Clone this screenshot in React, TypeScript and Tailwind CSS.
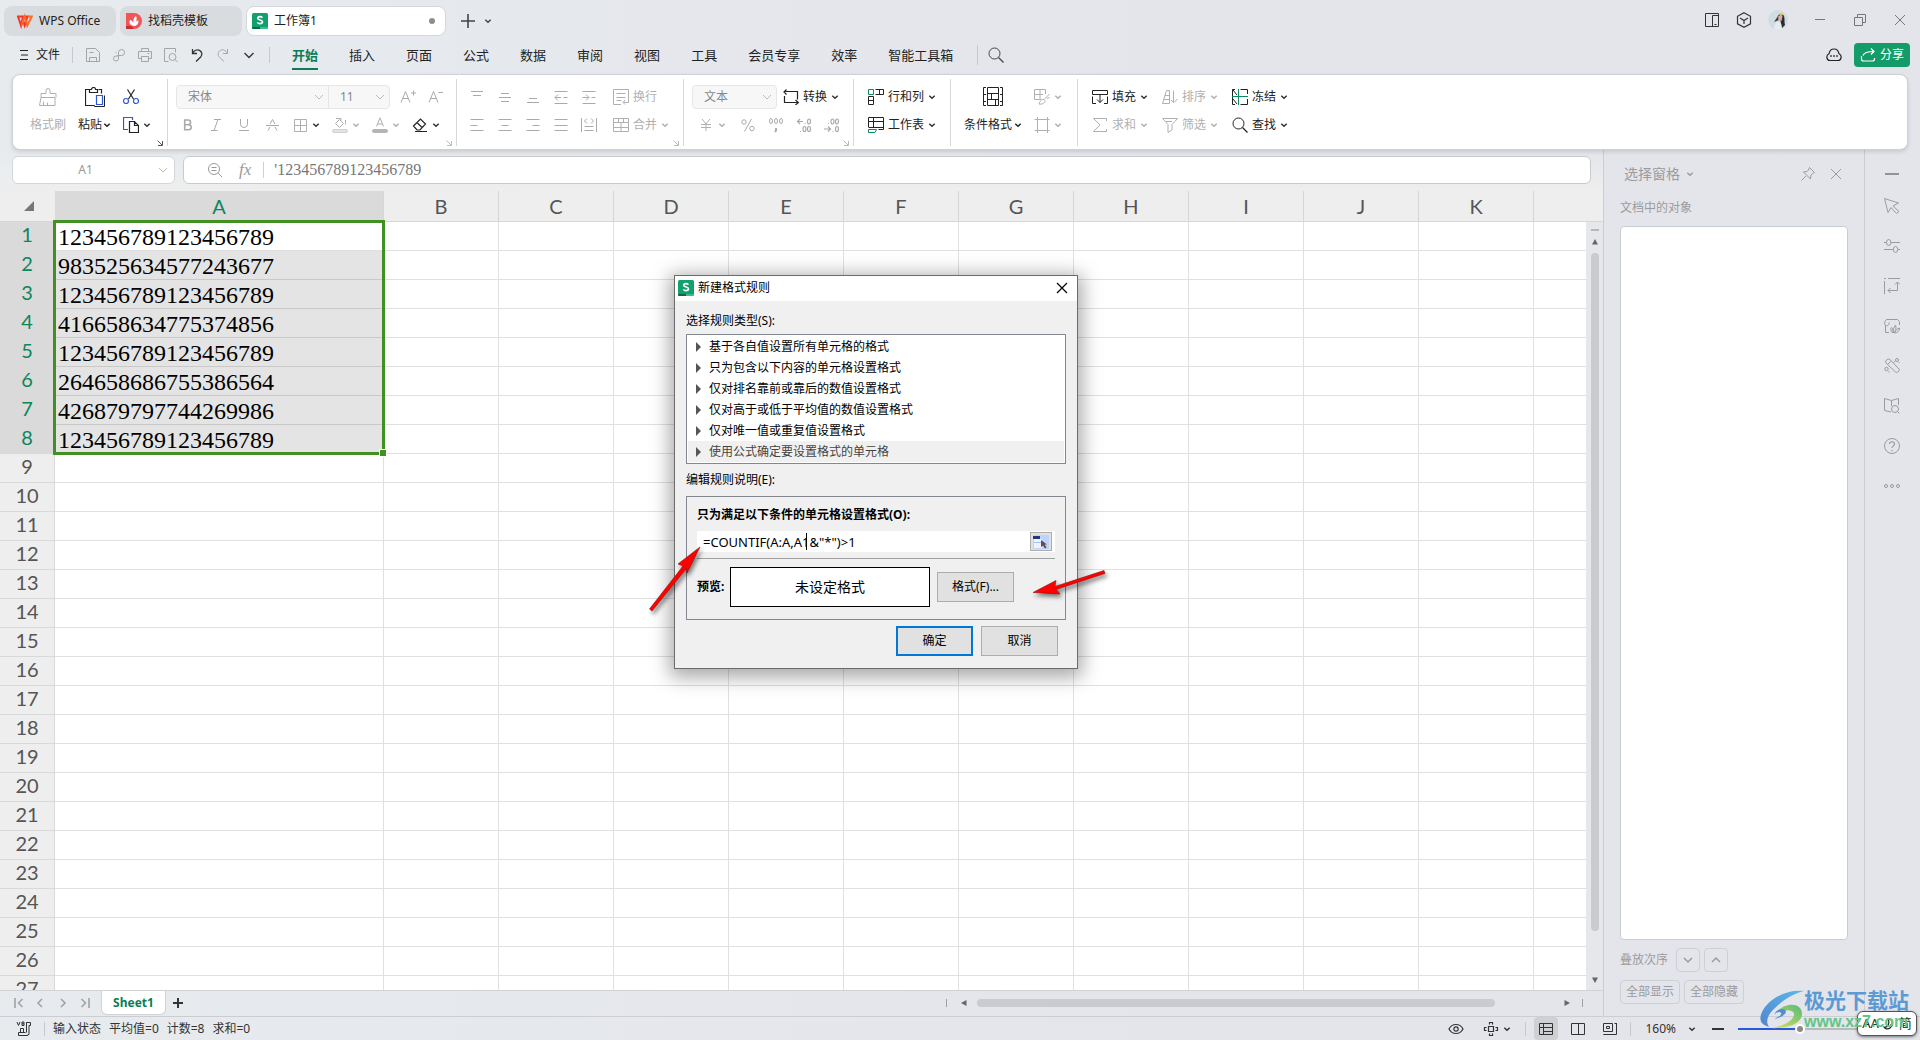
import type { ReactNode } from 'react'

// ─── Data ─────────────────────────────────────────────────────────────────────

const MENU = ['开始', '插入', '页面', '公式', '数据', '审阅', '视图', '工具', '会员专享', '效率', '智能工具箱']

const COLUMNS = ['A', 'B', 'C', 'D', 'E', 'F', 'G', 'H', 'I', 'J', 'K']

const VALUES = [
  '123456789123456789',
  '983525634577243677',
  '123456789123456789',
  '416658634775374856',
  '123456789123456789',
  '264658686755386564',
  '426879797744269986',
  '123456789123456789',
]

const ROWS = Array.from({ length: 27 }, (_, i) => i + 1)

const RULES = [
  '基于各自值设置所有单元格的格式',
  '只为包含以下内容的单元格设置格式',
  '仅对排名靠前或靠后的数值设置格式',
  '仅对高于或低于平均值的数值设置格式',
  '仅对唯一值或重复值设置格式',
  '使用公式确定要设置格式的单元格',
]

// ─── Icons ────────────────────────────────────────────────────────────────────

type IconProps = {
  children: ReactNode
  className?: string
  box?: number
}

function Icon({ children, className = 'size-4', box = 16 }: IconProps) {
  return (
    <svg
      className={`shrink-0 ${className}`}
      viewBox={`0 0 ${box} ${box}`}
      fill="none"
      stroke="currentColor"
      aria-hidden="true"
    >
      {children}
    </svg>
  )
}

function Chevron({ className = '' }: { className?: string }) {
  return (
    <Icon box={8} className={`size-2 ${className}`}>
      <path d="M1.3 2.8 4 5.3l2.7-2.5" strokeWidth="1.5" />
    </Icon>
  )
}

function WideChevron() {
  return (
    <Icon box={10} className="size-2.5">
      <path d="M1 3l4 4 4-4" />
    </Icon>
  )
}

function SheetLogo() {
  return (
    <svg className="size-4 shrink-0" viewBox="0 0 16 16" aria-hidden="true">
      <rect width="16" height="16" rx="1.5" fill="#12a06c" />
      <path d="M0 14h8v2H1.500A1.500 1.500 0 0 1 0 14.500z" fill="#066b46" />
      <path d="M8 14h8v.5a1.500 1.500 0 0 1-1.500 1.500H8z" fill="#41b98b" />
      <path
        d="M10.400 4.700C9.900 3.900 9 3.600 8 3.600c-1.300 0-2.300.6-2.300 1.700 0 2.400 4.800 1.100 4.800 3.500 0 1.100-1.100 1.800-2.500 1.800-1.200 0-2.100-.5-2.600-1.300"
        fill="none"
        stroke="#fff"
        strokeWidth="1.600"
      />
    </svg>
  )
}

const icons = {
  save: (
    <Icon>
      <path d="M1.500 1.500h9l4 4v9h-13zM4.500 14.500v-4h7v4M4.500 5.500h4" />
    </Icon>
  ),
  link: (
    <Icon>
      <path d="M6.500 8.500h4a3 3 0 1 0-3-3v6a2.500 2.500 0 1 1-2.500-2.500h2.500M4.500 5.500h1" />
    </Icon>
  ),
  print: (
    <Icon>
      <path d="M4.500 4.500v-3h7v3M4.500 11.500h-3v-7h13v7h-3M4.500 9.500h7v5h-7zM10.500 6.500h2" />
    </Icon>
  ),
  preview: (
    <Icon>
      <path d="M5.500 14.500h-4v-13h11v4" />
      <circle cx="9.500" cy="10" r="3.500" />
      <path d="m12 12.500 2.500 2.500" />
    </Icon>
  ),
  undo: (
    <Icon>
      <path d="M3.500 2v4.500H8M3.800 6.200C5 3.500 8 2 10.500 3.300c2.800 1.500 3 4.700 1.200 6.700L7 14.500" strokeWidth="1.300" />
    </Icon>
  ),
  redo: (
    <Icon>
      <path d="M12.500 2v4.500H8M12.200 6.200C11 3.500 8 2 5.500 3.300c-2.800 1.500-3 4.700-1.200 6.700L9 14.500" />
    </Icon>
  ),
  search: (
    <Icon>
      <circle cx="6.500" cy="6.500" r="5.500" />
      <path d="m10.500 10.500 5 5" strokeWidth="1.300" />
    </Icon>
  ),
  brush: (
    <Icon box={20} className="size-5">
      <path d="M1.500 18.500 3 10.500h14v8zM3 10.500v-4h5V3.500a2 2 0 0 1 4 0v3h6v4M5.500 18.500v-4M9.500 18.500v-3" />
    </Icon>
  ),
  paste: (
    <Icon box={20} className="size-5">
      <path d="M4.500 2.500h-4v16h9M13.500 2.500h3v4M4.500 5.500v-3h2a2 2 0 0 1 4 0h2v3z" strokeWidth="1.200" />
      <path d="M11.500 8.500h6v9h-6z" stroke="#2b57d9" strokeWidth="1.200" />
      <path d="M9.500 18.500v1h10v-11" />
    </Icon>
  ),
  cut: (
    <Icon>
      <path d="M4.500.5 10.500 10M11.500.5 5.500 10" strokeWidth="1.200" />
      <circle cx="3" cy="12" r="2.500" stroke="#2b57d9" strokeWidth="1.200" />
      <circle cx="13" cy="12" r="2.500" stroke="#2b57d9" strokeWidth="1.200" />
    </Icon>
  ),
  copy: (
    <Icon>
      <path d="M5 12.500H.5V.5h9V3" stroke="#2b57d9" strokeWidth="1.200" />
      <path d="M6.500 4.500h5l4 4v7h-9zM11.500 4.500v4h4" strokeWidth="1.200" />
    </Icon>
  ),
  grow: (
    <Icon>
      <path d="M1 13.500 5.500 2.500l4.500 11M2.500 9.500h6M11 4h5M13.500 1.500v5" />
    </Icon>
  ),
  shrink: (
    <Icon>
      <path d="M1 13.500 5.500 2.500l4.500 11M2.500 9.500h6M10.500 3.500H15" />
    </Icon>
  ),
  bold: (
    <Icon>
      <path d="M4.700 3h3.500a2.300 2.300 0 0 1 0 4.700H4.700zM4.700 7.700h4a2.500 2.500 0 0 1 0 5h-4z" strokeWidth="1.600" />
    </Icon>
  ),
  italic: (
    <Icon>
      <path d="M6 2.500h7M3 13.500h6.500M10 2.500l-4 11" />
    </Icon>
  ),
  underline: (
    <Icon>
      <path d="M4.500 2v5a3.500 3.500 0 0 0 7 0V2M3 13.500h10" />
    </Icon>
  ),
  strike: (
    <Icon>
      <path d="M2 8.500h13M4 13.500l2-3.500M13 13.500 11 10M6 7 8.500 2.500 11 7" />
    </Icon>
  ),
  border: (
    <Icon>
      <path d="M2.500 2.500h12v12h-12zM8.500 2.500v12M2.500 8.500h12" />
    </Icon>
  ),
  fill: (
    <Icon>
      <path d="M4 1.500h5v2M3.500 6.500 7.500 2.500l4 4-4 4zM13.500 3v4.500" />
      <rect x=".5" y="12.500" width="15" height="3" rx="1.500" fill="#e4e4e4" stroke="#d0d0d0" />
    </Icon>
  ),
  fontColor: (
    <Icon>
      <path d="M4.500 9.500 8 .8l3.500 8.700M5.500 7h5" />
      <rect x=".5" y="12.500" width="15" height="3" rx="1.500" fill="#b5b5b5" stroke="#b5b5b5" />
    </Icon>
  ),
  eraser: (
    <Icon>
      <path d="m1.500 9 7-7 5 5-5.500 6H5zM5 5.500l5 5M3 14.500h12" strokeWidth="1.200" />
    </Icon>
  ),
  alignTop: (
    <Icon>
      <path d="M2 2.500h12M4 6.500h8" />
    </Icon>
  ),
  alignMiddle: (
    <Icon>
      <path d="M4 4.500h8M2 8.500h12M4 12.500h8" />
    </Icon>
  ),
  alignBottom: (
    <Icon>
      <path d="M4 9.500h8M2 13.500h12" />
    </Icon>
  ),
  outdent: (
    <Icon>
      <path d="M1.500 2.500h13M1.500 14.500h13M2 8.500h6M10.500 8.500h4M5 5.500l-3 3 3 3" />
    </Icon>
  ),
  indent: (
    <Icon>
      <path d="M1.500 2.500h13M1.500 14.500h13M1.500 8.500h6M10.500 8.500h4M5 5.500l3 3-3 3" />
    </Icon>
  ),
  alignLeft: (
    <Icon>
      <path d="M1.500 2.500h13M1.500 8.500h7M1.500 13.500h13" />
    </Icon>
  ),
  alignCenter: (
    <Icon>
      <path d="M1.500 2.500h13M4.500 8.500h7M1.500 13.500h13" />
    </Icon>
  ),
  alignRight: (
    <Icon>
      <path d="M1.500 2.500h13M7.500 8.500h7M1.500 13.500h13" />
    </Icon>
  ),
  justify: (
    <Icon>
      <path d="M1.500 2.500h13M1.500 8.500h13M1.500 13.500h13" />
    </Icon>
  ),
  distribute: (
    <Icon>
      <path d="M.5 1v14M15.500 1v14M3.500 9.500h9M3.500 13.500h9M6 1.500 3.500 4 6 6.500M10 1.500 12.500 4 10 6.500" />
    </Icon>
  ),
  wrap: (
    <Icon>
      <path d="M8 15.500H.5V.5h15v13h-5M3.500 4.500h9M3.500 8.500h9M3.500 11.500h5M12 11l-2 2.500 2 2" />
    </Icon>
  ),
  merge: (
    <Icon>
      <path d="M.5 1.500h15v13H.5zM.5 5.500h15M5.500 1.500v4M10.500 1.500v4M.5 10.500h15M8 5.500v9" />
    </Icon>
  ),
  convert: (
    <Icon>
      <path d="M3.500.5 1 3l2.500 2.500M1.500 7v6.500h13M12.500 11l3 2.500-3 2.500M1 2.500h13.500v8" strokeWidth="1.200" />
    </Icon>
  ),
  yen: (
    <Icon>
      <path d="M4 2l4 5 4-5M3 7.500h10M3 10.500h10M8 7v7" />
    </Icon>
  ),
  percent: (
    <Icon>
      <circle cx="4" cy="5" r="2.200" />
      <circle cx="12" cy="11.500" r="2.200" />
      <path d="m11.500 2-7 12.500" />
    </Icon>
  ),
  thousands: (
    <Icon>
      <ellipse cx="3" cy="4" rx="1.500" ry="2.500" />
      <ellipse cx="8" cy="4" rx="1.500" ry="2.500" />
      <ellipse cx="13" cy="4" rx="1.500" ry="2.500" />
      <path d="M8 11v2.500L7 15" strokeWidth="2" />
    </Icon>
  ),
  addDecimal: (
    <Icon>
      <path d="M4 2 1.500 4.500 4 7M1.500 4.500H7M8.500 6.500h1M4 14.500h1" strokeWidth="1.200" />
      <ellipse cx="13" cy="4.500" rx="1.500" ry="2.500" strokeWidth="1.200" />
      <ellipse cx="8.500" cy="12" rx="1.500" ry="2.500" strokeWidth="1.200" />
      <ellipse cx="13" cy="12" rx="1.500" ry="2.500" strokeWidth="1.200" />
    </Icon>
  ),
  cutDecimal: (
    <Icon>
      <path d="m4 9.500 2.500 2.500L4 14.500M0 12h6.500M8.500 14.500h1M4 6.500h1" strokeWidth="1.200" />
      <ellipse cx="13" cy="12" rx="1.500" ry="2.500" strokeWidth="1.200" />
      <ellipse cx="8.500" cy="4.500" rx="1.500" ry="2.500" strokeWidth="1.200" />
      <ellipse cx="13" cy="4.500" rx="1.500" ry="2.500" strokeWidth="1.200" />
    </Icon>
  ),
  rowCol: (
    <Icon>
      <path d="M7.500.5h8v5h-8M11.500.5v5M.5 7.500h5v8h-5zM.5 11.500h5" />
      <path d="M.5.5h5v5h-5z" stroke="#0f8a5f" />
    </Icon>
  ),
  worksheet: (
    <Icon>
      <path d="M.5 10V.5h15v12h-5M.5 4.500h15M5.500.5V10M.5 10.500H15" />
      <path d="M.5 12.500h8l-1.500 3H.5z" stroke="#0f8a5f" />
    </Icon>
  ),
  conditional: (
    <Icon box={20} className="size-5">
      <path d="M3 .5H.5v18H3M17 .5h2.500v18H17M.5 7.500H3M.5 14.500H3M17 7.500h2.500M17 14.500h2.500M4.500.5h11v18h-11zM4.500 6.500h11M4.500 12.500h11M8.500 6.500v6M12.500 12.500v6" />
    </Icon>
  ),
  tableStyle: (
    <Icon>
      <path d="M7 10.500H.5V.5h11V5M.5 5.500H9M6 .5v10M15.500 5 10 10.500M13 9.500l2.500-1M10 10.500c-3-.5-4 2-5 4.500 3 .5 6-.5 6-3.500z" />
    </Icon>
  ),
  cellStyle: (
    <Icon>
      <path d="M.5 2.500h15M.5 13.500h15M3.500 0v16M13.500 0v16" />
    </Icon>
  ),
  fillDown: (
    <Icon>
      <path d="M4 14.500H.5v-7M12 14.500h3.500v-7M.5 5.500v-4h15v4zM8 5.500v8M5 10.500l3 3 3-3" />
    </Icon>
  ),
  sort: (
    <Icon>
      <path d="M.5 14.500h7V1.500h-3zM2 10.500h5.500M3 6.500h4.500M11.500 1.500v12M9 11l2.500 2.500M15.500 10 12 13.500" />
    </Icon>
  ),
  sum: (
    <Icon>
      <path d="M14.500 4V1.500h-13L8 8l-6.500 6.500h13V12" />
    </Icon>
  ),
  filter: (
    <Icon>
      <path d="M.5 1.500h15L10 7.500v5.500L6 15.500v-8zM4 4.500h6" />
    </Icon>
  ),
  freeze: (
    <Icon>
      <path d="M3 .5H.5v15H3M8.500.5H15.500V5M15.500 10v5.500H8.500M1 1l4 5M1 10l4 5M.5 6V.5" />
      <path d="M6.500 0v16M0 7.500h16" stroke="#0f8a5f" />
    </Icon>
  ),
}

// ─── Ribbon pieces ────────────────────────────────────────────────────────────

type ToolProps = {
  icon?: ReactNode
  label?: string
  title?: string
  menu?: boolean
  muted?: boolean
  mutedMenu?: boolean
  className?: string
}

function Tool({ icon, label, title, menu, muted, mutedMenu = muted, className = '' }: ToolProps) {
  return (
    <button
      type="button"
      title={title}
      aria-label={label ?? title}
      className={`flex h-7 items-center gap-1 whitespace-nowrap ${muted ? 'text-[#b0b0b0]' : 'text-[#222]'} ${className}`}
    >
      {icon}
      {label && <span>{label}</span>}
      {menu && <Chevron className={mutedMenu ? 'text-[#b0b0b0]' : 'text-[#333]'} />}
    </button>
  )
}

function SmallTool({ icon, title }: { icon: ReactNode; title: string }) {
  return (
    <button type="button" title={title} aria-label={title} className="flex h-7 w-7 items-center justify-center text-[#aaa]">
      {icon}
    </button>
  )
}

type GroupProps = {
  children: ReactNode
  className: string
  launcher?: 'dark' | 'light'
}

function Group({ children, className, launcher }: GroupProps) {
  return (
    <div className={`relative flex h-[67px] shrink-0 border-r border-[#d8d8d8] pt-1 ${className}`}>
      {children}
      {launcher && (
        <Icon
          box={6}
          className={`absolute right-1 bottom-0 size-1.5 ${launcher === 'dark' ? 'text-[#555]' : 'text-[#bbb]'}`}
        >
          <path d="M.5.5 5 5M5.500 1v4.500H1" />
        </Icon>
      )}
    </div>
  )
}

type ComboProps = {
  label: string
  value: string
  className: string
}

function Combo({ label, value, className }: ComboProps) {
  return (
    <label className={`relative flex h-full items-center text-[#bbb] ${className}`}>
      <select
        aria-label={label}
        defaultValue={value}
        className="h-full w-full appearance-none bg-transparent pl-[11px] text-[#888] outline-none"
      >
        <option>{value}</option>
      </select>
      <span className="pointer-events-none absolute right-1">
        <WideChevron />
      </span>
    </label>
  )
}

function Ribbon() {
  return (
    <section className="relative z-10 mx-3 flex h-[76px] rounded-lg border border-[#cdd0d4] bg-white pt-1 text-xs shadow-[0_2px_4px_rgba(0,0,0,0.12)]">
      <Group className="w-[155px] gap-3 pl-[17px]" launcher="dark">
        <button type="button" className="flex w-9 flex-col items-center text-[#b0b0b0]">
          <span className="flex h-7 items-center">{icons.brush}</span>
          <span className="flex h-7 items-center whitespace-nowrap">格式刷</span>
        </button>
        <button type="button" className="flex w-[33px] flex-col items-center text-[#222]">
          <span className="flex h-7 items-center">{icons.paste}</span>
          <span className="flex h-7 items-center gap-px whitespace-nowrap">
            粘贴
            <Chevron />
          </span>
        </button>
        <div>
          <Tool icon={icons.cut} title="剪切" />
          <Tool icon={icons.copy} title="复制" menu />
        </div>
      </Group>

      <Group className="w-[289px] flex-col pl-1.5" launcher="light">
        <div className="flex h-7 items-center pl-0.5">
          <div className="flex h-6 w-[214px] rounded-sm border border-[#e6e6e6] bg-[#f7f7f7]">
            <Combo label="字体" value="宋体" className="w-[152px] border-r border-[#e6e6e6]" />
            <Combo label="字号" value="11" className="flex-1" />
          </div>
          <div className="ml-1 flex">
            <SmallTool icon={icons.grow} title="增大字号" />
            <SmallTool icon={icons.shrink} title="减小字号" />
          </div>
        </div>
        <div className="flex">
          <SmallTool icon={icons.bold} title="加粗" />
          <SmallTool icon={icons.italic} title="倾斜" />
          <SmallTool icon={icons.underline} title="下划线" />
          <SmallTool icon={icons.strike} title="删除线" />
          <div className="ml-1.5 flex">
            <Tool icon={icons.border} title="边框" menu muted mutedMenu={false} className="w-10" />
            <Tool icon={icons.fill} title="填充颜色" menu muted className="w-10" />
            <Tool icon={icons.fontColor} title="字体颜色" menu muted className="w-10" />
            <Tool icon={icons.eraser} title="清除" menu className="w-10" />
          </div>
        </div>
      </Group>

      <Group className="w-[227px] pl-1.5" launcher="light">
        <div className="grid h-14 grid-cols-5">
          <SmallTool icon={icons.alignTop} title="顶端对齐" />
          <SmallTool icon={icons.alignMiddle} title="垂直居中" />
          <SmallTool icon={icons.alignBottom} title="底端对齐" />
          <SmallTool icon={icons.outdent} title="减少缩进量" />
          <SmallTool icon={icons.indent} title="增加缩进量" />
          <SmallTool icon={icons.alignLeft} title="左对齐" />
          <SmallTool icon={icons.alignCenter} title="水平居中" />
          <SmallTool icon={icons.alignRight} title="右对齐" />
          <SmallTool icon={icons.justify} title="两端对齐" />
          <SmallTool icon={icons.distribute} title="分散对齐" />
        </div>
        <div className="ml-2.5">
          <Tool icon={icons.wrap} label="换行" muted />
          <Tool icon={icons.merge} label="合并" muted menu />
        </div>
      </Group>

      <Group className="w-[170px] flex-col pl-2" launcher="light">
        <div className="flex h-7 items-center gap-1.5">
          <div className="h-6 w-[85px] rounded-sm border border-[#e6e6e6] bg-[#f7f7f7]">
            <Combo label="数字格式" value="文本" className="" />
          </div>
          <Tool icon={icons.convert} label="转换" menu />
        </div>
        <div className="flex pl-1.5">
          <Tool icon={icons.yen} title="中文货币符号" menu muted className="w-9" />
          <SmallTool icon={icons.percent} title="百分比样式" />
          <SmallTool icon={icons.thousands} title="千位分隔样式" />
          <SmallTool icon={icons.addDecimal} title="增加小数位数" />
          <SmallTool icon={icons.cutDecimal} title="减少小数位数" />
        </div>
      </Group>

      <Group className="w-[97px] flex-col pl-3.5">
        <Tool icon={icons.rowCol} label="行和列" menu />
        <Tool icon={icons.worksheet} label="工作表" menu />
      </Group>

      <Group className="w-[127px] gap-3 pl-[13px]">
        <button type="button" className="flex flex-col items-center text-[#222]">
          <span className="flex h-7 items-center">{icons.conditional}</span>
          <span className="flex h-7 items-center gap-0.5 whitespace-nowrap">
            条件格式
            <Chevron />
          </span>
        </button>
        <div>
          <Tool icon={icons.tableStyle} title="表格样式" menu muted />
          <Tool icon={icons.cellStyle} title="单元格样式" menu muted />
        </div>
      </Group>

      <div className="flex gap-3.5 pt-1 pl-3.5">
        <div>
          <Tool icon={icons.fillDown} label="填充" menu />
          <Tool icon={icons.sum} label="求和" menu muted />
        </div>
        <div>
          <Tool icon={icons.sort} label="排序" menu muted />
          <Tool icon={icons.filter} label="筛选" menu muted />
        </div>
        <div>
          <Tool icon={icons.freeze} label="冻结" menu />
          <Tool icon={icons.search} label="查找" menu />
        </div>
      </div>
    </section>
  )
}

// ─── Top bars ─────────────────────────────────────────────────────────────────

function TabBar() {
  return (
    <div className="flex h-10 justify-between px-1 pt-1.5 pb-1 text-xs text-[#222]">
      <div className="flex gap-1">
        <button type="button" className="flex w-28 items-center gap-1.5 rounded-lg bg-[#d9dcde] pl-[13px]">
          <Icon>
            <path d="M0 3.500h10.500L7.700 12.500 5.500 6 4 12.500 1.200 4" stroke="#f5352b" strokeWidth="2" />
            <path d="m4.500 12.500 3.200-9 2.600 9 4.500-9h-4" stroke="#ff6a2a" strokeWidth="2" />
          </Icon>
          WPS Office
        </button>
        <button type="button" className="flex w-[122px] items-center gap-1.5 rounded-lg bg-[#d9dcde] pl-1.5">
          <Icon>
            <path d="M0 0h8a8 8 0 0 1 0 16H0z" fill="#f25555" stroke="none" />
            <path d="M0 13h5l3 3H0z" fill="#c92f35" stroke="none" />
            <path d="M8 13c-5-1-5-4-4-6 2 .5 3 1.500 3.500 3C7 7 8 4 10 3c1 2 .8 4 0 6 .8-1 1.500-1.500 2.500-1.500 0 3-1.500 5.500-4.500 5.500z" fill="#fff" stroke="none" />
          </Icon>
          找稻壳模板
        </button>
        <button
          type="button"
          className="flex w-[200px] items-center gap-1.5 rounded-lg border border-[#d4d8dc] bg-white pr-2.5 pl-[5px]"
        >
          <SheetLogo />
          工作簿1
          <span className="ml-auto size-1.5 rounded-full bg-[#8d8d8d]" />
        </button>
        <button type="button" aria-label="新建" className="ml-2.5 flex items-center text-[#444]">
          <Icon>
            <path d="M8 1v14M1 8h14" strokeWidth="1.600" />
          </Icon>
        </button>
        <button type="button" aria-label="标签列表" className="ml-1 flex items-center text-[#444]">
          <Chevron />
        </button>
      </div>

      <div className="flex items-center pr-2 pb-0.5 text-[#333]">
        <button type="button" aria-label="侧栏" className="mr-4">
          <Icon>
            <path d="M1.500 1.500h13v13h-13zM8.500 14.500v-11h6M10.500 12.500h2" />
          </Icon>
        </button>
        <button type="button" aria-label="应用" className="mr-4">
          <Icon>
            <path d="m8 .8 6.500 3.500v7.500L8 15.300l-6.500-3.500V4.300zM4 6l4 2.500L12 6M8 8.500V12" strokeWidth="1.200" />
          </Icon>
        </button>
        <svg className="mr-6 size-5 rounded-full" viewBox="0 0 20 20" aria-label="账户">
          <rect width="20" height="20" fill="#cfdde3" />
          <path d="M10 6c1-2.500 5-2.500 6 0 1 3 0 6 1 9l-3 3-1.500-7z" fill="#2f2a30" />
          <path d="M6 12 10 6l1 4z" fill="#4a3b40" />
          <path d="M10.500 6.500c1-2 3.500-2 4 0l-1 4.500-3-1z" fill="#dcae9f" />
          <path d="M6 20c0-5 1-7 4-8.500l3 2 1 6.500z" fill="#e3edef" />
          <path d="M12 4.500c1-.5 3-.5 3.500.5" stroke="#e2ba62" strokeWidth="1.500" fill="none" />
        </svg>
        <div className="flex gap-6 text-[#777]">
          <button type="button" aria-label="最小化">
            <Icon>
              <path d="M3 7.500h10" />
            </Icon>
          </button>
          <button type="button" aria-label="还原">
            <Icon>
              <path d="M2.500 5.500h8v8h-8zM5.500 5.500v-3h8v8h-3" />
            </Icon>
          </button>
          <button type="button" aria-label="关闭">
            <Icon>
              <path d="m3 3 10 10M13 3 3 13" />
            </Icon>
          </button>
        </div>
      </div>
    </div>
  )
}

function MenuBar() {
  return (
    <div className="mb-1 flex h-[30px] items-center pr-2.5 pl-[18px] text-[#222]">
      <button type="button" className="flex items-center gap-1.5 text-xs">
        <Icon box={12} className="size-3">
          <path d="M2 1.500h8M3 6h7M2 10.500h8" />
        </Icon>
        文件
      </button>
      <span className="mr-3 ml-3 h-4 w-px bg-[#c6c9cd]" />
      <div className="flex items-center gap-2.5 text-[#a3a6a9]">
        <button type="button" aria-label="保存">{icons.save}</button>
        <button type="button" aria-label="输出">{icons.link}</button>
        <button type="button" aria-label="打印">{icons.print}</button>
        <button type="button" aria-label="打印预览">{icons.preview}</button>
        <button type="button" aria-label="撤销" className="text-[#333]">{icons.undo}</button>
        <button type="button" aria-label="恢复">{icons.redo}</button>
        <button type="button" aria-label="更多" className="text-[#333]">
          <Icon>
            <path d="m3.500 6 4.500 4.500L12.500 6" strokeWidth="1.300" />
          </Icon>
        </button>
      </div>
      <span className="mr-[22px] ml-3 h-4 w-px bg-[#c6c9cd]" />
      <nav className="flex h-full gap-[31px] text-[13px]">
        {MENU.map((name, i) => (
          <button
            key={name}
            type="button"
            className={`h-full border-b-2 pt-1 whitespace-nowrap ${
              i === 0 ? 'border-[#0a7d56] font-bold text-[#0a7d56]' : 'border-transparent'
            }`}
          >
            {name}
          </button>
        ))}
      </nav>
      <span className="mr-2.5 ml-6 h-5 w-px bg-[#c6c9cd]" />
      <button type="button" aria-label="搜索" className="text-[#444]">
        {icons.search}
      </button>

      <div className="ml-auto flex items-center gap-3">
        <button type="button" aria-label="云同步">
          <Icon>
            <path d="M4 13.500a3.500 3.500 0 0 1-1-6.700C3.500 4 5.500 2 8 2s4.500 2 5 4.800a3.500 3.500 0 0 1-1 6.700z" strokeWidth="1.200" />
            <path d="M4.200 9h1.600M7.200 9h1.600M10.200 9h1.600" strokeWidth="1.600" />
          </Icon>
        </button>
        <button
          type="button"
          className="flex h-6 w-14 items-center justify-center gap-1 rounded-sm bg-[#139c69] text-xs text-white"
        >
          <Icon>
            <path d="M1.500 9v3a2 2 0 0 0 2 2h9a2 2 0 0 0 2-2v-1M3 8.500C4 5.500 7 4.500 14 4.500M11 1.500l3 3-3 3" strokeWidth="1.200" />
          </Icon>
          分享
        </button>
      </div>
    </div>
  )
}

// ─── Sheet ────────────────────────────────────────────────────────────────────

function FormulaBar() {
  return (
    <div className="flex h-[41px] gap-2 bg-linear-to-b from-transparent to-[#eeeeee] pt-1.5 pr-3 pb-[7px] pl-3">
      <label className="relative flex w-[163px] items-center rounded-md border border-[#d3d6da] bg-white text-[#bbb]">
        <input
          aria-label="名称框"
          defaultValue="A1"
          className="w-full bg-transparent pr-4 text-center text-xs text-[#999] outline-none"
        />
        <span className="absolute right-1.5">
          <WideChevron />
        </span>
      </label>
      <div className="flex flex-1 items-center rounded-md border border-[#c8cbce] bg-white pl-[23px] text-[#999]">
        <Icon>
          <circle cx="7" cy="7" r="5.500" />
          <path d="m11 11 4 4M4.500 5.500h5M4.500 8.500h5" />
        </Icon>
        <span className="mr-3 ml-4 font-['Liberation_Serif',serif] text-[17px] italic">fx</span>
        <span className="mr-2.5 h-4 w-px bg-[#d0d0d0]" />
        <input
          aria-label="编辑栏"
          defaultValue="'123456789123456789"
          className="h-full flex-1 bg-transparent font-['Liberation_Serif',serif] text-base text-[#777] outline-none"
        />
      </div>
    </div>
  )
}

function Grid() {
  return (
    <div className="relative min-h-0 flex-1 overflow-hidden bg-white">
      <table className="w-full table-fixed border-separate border-spacing-0 font-['Lato',sans-serif] text-xl leading-6 text-[#555]">
        <thead>
          <tr className="h-[31px] bg-[#eeeeee]">
            <th className="w-[55px] border-b border-[#d6d6d6] p-0">
              <svg className="ml-6 size-2.5" viewBox="0 0 10 10" aria-label="全选">
                <path d="M10 0v10H0z" fill="#777" />
              </svg>
            </th>
            {COLUMNS.map((col) => (
              <th
                key={col}
                scope="col"
                className={`border-r border-b border-[#d6d6d6] p-0 font-normal ${
                  col === 'A' ? 'w-[329px] bg-[#dadada] text-[#0e865b]' : 'w-[115px]'
                }`}
              >
                {col}
              </th>
            ))}
            <th className="border-b border-[#d6d6d6] p-0" />
          </tr>
        </thead>
        <tbody>
          {ROWS.map((row) => {
            const selected = row <= VALUES.length
            return (
              <tr key={row} className="h-[29px]">
                <th
                  scope="row"
                  className={`border-r border-b border-[#d9d9d9] p-0 pb-1 font-normal ${
                    selected ? 'bg-[#dadada] text-[#0e865b]' : 'bg-[#eeeeee]'
                  }`}
                >
                  {row}
                </th>
                <td
                  className={`border-r border-b p-0 pt-0.5 pl-[3px] font-['Liberation_Serif',serif] text-2xl leading-6 text-black ${
                    selected && row > 1 ? 'border-[#c9c9c9] bg-[#e4e4e4]' : 'border-[#e0e0e0]'
                  }`}
                >
                  {VALUES[row - 1]}
                </td>
                {COLUMNS.slice(1).map((col) => (
                  <td key={col} className="border-r border-b border-[#e0e0e0] p-0" />
                ))}
                <td className="border-b border-[#e0e0e0] p-0" />
              </tr>
            )
          })}
        </tbody>
      </table>

      {/* selection outline over A1:A8 with its fill handle */}
      <div className="pointer-events-none absolute top-[29px] left-[53px] h-[235px] w-[332px] border-3 border-[#439022]">
        <span className="absolute -right-1 -bottom-1 size-1.5 bg-[#439022] outline outline-white" />
      </div>

      <div className="absolute top-[31px] right-0 bottom-0 flex w-[17px] flex-col items-center bg-[#e6e7ea] py-[7px] text-[#666]">
        <span className="h-0.5 w-2 bg-[#b5b7ba]" />
        <svg className="mt-2 size-1.5" viewBox="0 0 6 6" aria-hidden="true">
          <path d="M0 5.500h6L3 0z" fill="currentColor" />
        </svg>
        <span className="mt-2 mb-[46px] w-2 flex-1 rounded-full bg-[#cacbcf]" />
        <svg className="size-1.5" viewBox="0 0 6 6" aria-hidden="true">
          <path d="M0 .5h6L3 6z" fill="currentColor" />
        </svg>
      </div>
    </div>
  )
}

function SheetTabs() {
  return (
    <div className="flex h-[26px] items-start border-t border-[#d0d3d6] pl-[11px] text-[#a0a3a6]">
      <div className="flex h-6 items-center gap-1.5">
        <button type="button" aria-label="第一张">
          <Icon>
            <path d="M4 3v10M11.500 4l-4 4 4 4" strokeWidth="1.600" />
          </Icon>
        </button>
        <button type="button" aria-label="上一张">
          <Icon>
            <path d="m9 4-4 4 4 4" strokeWidth="1.600" />
          </Icon>
        </button>
        <button type="button" aria-label="下一张">
          <Icon>
            <path d="m6 4 4 4-4 4" strokeWidth="1.600" />
          </Icon>
        </button>
        <button type="button" aria-label="最后一张">
          <Icon>
            <path d="M12 3v10M4.500 4l4 4-4 4" strokeWidth="1.600" />
          </Icon>
        </button>
      </div>
      <button
        type="button"
        className="ml-2 h-6 w-[65px] rounded-b-md border-x border-b border-[#d0d3d6] bg-white text-xs font-bold text-[#0a7d56]"
      >
        Sheet1
      </button>
      <button type="button" aria-label="新建工作表" className="ml-1.5 flex h-6 items-center text-[#333]">
        <Icon box={12} className="size-3">
          <path d="M6 1v10M1 6h10" strokeWidth="2" />
        </Icon>
      </button>
      <div className="ml-auto flex h-6 w-[657px] items-center text-[#666]">
        <span className="mr-3.5 h-2 w-px bg-[#a0a0a0]" />
        <svg className="size-1.5" viewBox="0 0 6 6" aria-hidden="true">
          <path d="M5.500 0v6L0 3z" fill="currentColor" />
        </svg>
        <span className="ml-2.5 h-2 w-[518px] rounded-full bg-[#cacbcf]" />
        <svg className="ml-auto size-1.5" viewBox="0 0 6 6" aria-hidden="true">
          <path d="M.5 0v6L6 3z" fill="currentColor" />
        </svg>
        <span className="mr-5 ml-3 h-2 w-px bg-[#a0a0a0]" />
      </div>
    </div>
  )
}

// ─── Right side ───────────────────────────────────────────────────────────────

function SelectionPane() {
  return (
    <aside className="flex w-[261px] flex-col border-l border-[#cbcdd2] px-4 pb-3 text-xs text-[#9a9ba0]">
      <div className="flex h-12 items-center pl-1 text-sm">
        选择窗格
        <Chevron className="ml-1.5" />
        <button type="button" aria-label="固定" className="mr-3 ml-auto">
          <Icon>
            <path d="m9.500 1.500 5 5-2 1-1.500 1.500-.5 4-7-7L7 5.500 8.500 4zM6 10l-4.500 4.500" />
          </Icon>
        </button>
        <button type="button" aria-label="关闭窗格" className="mr-1">
          <Icon>
            <path d="m3 3 10 10M13 3 3 13" />
          </Icon>
        </button>
      </div>
      <p className="h-7 leading-5">文档中的对象</p>
      <div className="flex-1 rounded-sm border border-[#c8ccd3] bg-white" />
      <div className="mt-2 flex h-6 items-center gap-1">
        <span className="mr-1">叠放次序</span>
        <button type="button" aria-label="下移" className="flex size-6 items-center justify-center rounded-sm border border-[#cfd0d4]">
          <Icon box={12} className="size-3">
            <path d="m2 4 4 4 4-4" strokeWidth="1.500" />
          </Icon>
        </button>
        <button type="button" aria-label="上移" className="flex size-6 items-center justify-center rounded-sm border border-[#cfd0d4]">
          <Icon box={12} className="size-3">
            <path d="m2 8 4-4 4 4" strokeWidth="1.500" />
          </Icon>
        </button>
      </div>
      <div className="mt-2 flex gap-1">
        <button type="button" className="h-6 w-[60px] rounded-sm border border-[#cfd0d4]">全部显示</button>
        <button type="button" className="h-6 w-[60px] rounded-sm border border-[#cfd0d4]">全部隐藏</button>
      </div>
    </aside>
  )
}

const RAIL = [
  {
    name: '选择',
    icon: <path d="m.5.500 14 4.500-5.500 3 6 5.500-2.500 2-5.500-6-3 5z" />,
  },
  {
    name: '属性',
    icon: (
      <>
        <path d="M0 4.500h2.500M7 4.500h9M0 11.500h9M14 11.500h2" />
        <ellipse cx="4.700" cy="4.500" rx="2.200" ry="3" />
        <ellipse cx="11.500" cy="11.500" rx="2.200" ry="3" />
      </>
    ),
  },
  {
    name: '分析',
    icon: <path d="M0 .5h2M4 .5h12M.5 3v13M4 12.500h9.500V4M6.500 10l-2.500 2.500L6.500 15M11 6.500 13.500 4 16 6.500" />,
  },
  {
    name: '风格',
    icon: (
      <path d="M5 14.500H1.500v-7C0 6 .5 2 3 1.500h10.500l2 2V7M1.500 7.500C4 8.500 5.500 6 5 4.500M8.500 15c-2-2-2-4-1-5.500 1.500 1.500 2 3.500 1 5.500zM9.500 15c-.5-4 .5-6 2-8 1 3 .5 6-2 8zM10.500 15c1-3 2.500-4 5-5 0 3-2 5-5 5z" />
    ),
  },
  {
    name: '工具',
    icon: (
      <>
        <path d="M3 1.500c1.500-1 3 0 4 1L15 11c1 1.500-1.500 4.500-3.500 3L2 5c-.8-1.500 0-2.700 1-3.500zM3.500 6.500l4-3.500" />
        <circle cx="13" cy="2" r="1.500" />
        <circle cx="2.500" cy="11" r="1.700" />
        <path d="M9.500 4.500 11.500 3M14.500 4.500h1M5 13v1.500" />
      </>
    ),
  },
  {
    name: '阅读',
    icon: (
      <>
        <path d="M7 14 .5 12.500v-12L7.500 2.500l7-2V7M7.500 2.500V8" />
        <circle cx="11" cy="11" r="3.500" />
        <path d="m13.500 13.500 2 2" />
      </>
    ),
  },
  {
    name: '帮助',
    icon: (
      <>
        <circle cx="8" cy="8" r="7.500" />
        <path d="M5.500 6c0-3 5-3 5 0 0 1.800-2.500 2-2.500 4M8 12v1.200" strokeWidth="1.200" />
      </>
    ),
  },
  {
    name: '更多',
    icon: (
      <>
        <circle cx="2" cy="8" r="1.500" />
        <circle cx="8" cy="8" r="1.500" />
        <circle cx="14" cy="8" r="1.500" />
      </>
    ),
  },
]

function ToolRail() {
  return (
    <aside className="flex w-14 flex-col items-center border-l border-[#cbcdd2] pt-[23px] pr-0.5 text-[#9a9ba0]">
      <button type="button" aria-label="收起" className="mb-[11px] h-0.5 w-3.5 bg-[#929397]" />
      {RAIL.map((item) => (
        <button key={item.name} type="button" aria-label={item.name} className="flex h-10 w-10 items-center justify-center">
          <Icon>{item.icon}</Icon>
        </button>
      ))}
    </aside>
  )
}

// ─── Status bar ───────────────────────────────────────────────────────────────

function StatusBar() {
  return (
    <footer className="flex h-6 items-center border-t border-[#cbcdd2] pr-[63px] pl-4 text-xs text-[#333]">
      <Icon>
        <path d="m1 1 1.500 3.500L4 1M6 1h2v3.500H6zM6 2.800h2M10.500 4.500V1.500h4v3h-1.500v9M10.500 1.500v10M2.500 11.500v3h8.500a1.500 1.500 0 0 0 1.500-1.500M2.500 11.500h7M4.500 11.500v-4h3v4" />
      </Icon>
      <span className="mr-2 ml-3 h-3.5 w-px bg-[#c6c9cd]" />
      <span className="mr-2">输入状态</span>
      <span className="mr-2">平均值=0</span>
      <span className="mr-2">计数=8</span>
      <span>求和=0</span>

      <div className="ml-auto flex h-full items-center">
        <button type="button" aria-label="护眼模式">
          <Icon>
            <path d="M1 8c3-6 11-6 14 0-3 6-11 6-14 0z" strokeWidth="1.200" />
            <circle cx="8" cy="8" r="2.200" strokeWidth="1.200" />
          </Icon>
        </button>
        <button type="button" aria-label="阅读模式" className="mr-3.5 ml-[19px] flex items-center gap-1">
          <Icon>
            <path d="M5.500 5.500h5v5h-5zM6.500 3.500v-2h3v2M6.500 12.500v2h3v-2M3.500 6.500h-2v3h2M12.500 6.500h2v3h-2" strokeWidth="1.200" />
          </Icon>
          <Chevron />
        </button>
        <span className="h-3.5 w-px bg-[#c6c9cd]" />
        <button type="button" aria-label="普通视图" className="ml-2 flex h-full w-6 items-center justify-center rounded-sm bg-[#cfd0d4]">
          <Icon>
            <path d="M1.500 2.500h13v11h-13zM1.500 6.500h13M5.500 2.500v11M5.500 10.500h9" />
          </Icon>
        </button>
        <button type="button" aria-label="分页预览" className="ml-3">
          <Icon>
            <path d="M1.500 2.500h13v11h-13zM8.500 2.500v11" />
          </Icon>
        </button>
        <button type="button" aria-label="页面布局" className="ml-4">
          <Icon>
            <path d="M1.500 2.500h9v8h-9zM14.500 2v11.500H1.500V13M4.500 5.500h3v2h-3zM12.500 2.500h2" />
          </Icon>
        </button>
        <span className="ml-3 h-3.5 w-px bg-[#c6c9cd]" />
        <button type="button" className="ml-3.5 flex items-center gap-3">
          160%
          <Chevron />
        </button>
        <button type="button" aria-label="缩小" className="mr-3.5 ml-4 h-0.5 w-3 bg-[#333]" />
        <input
          type="range"
          aria-label="缩放比例"
          min={0}
          max={100}
          defaultValue={52}
          className="h-0.5 w-[119px] appearance-none bg-linear-to-r from-[#2b57d9] from-52% to-[#b7b9bd] to-52% [&::-webkit-slider-thumb]:size-2.5 [&::-webkit-slider-thumb]:appearance-none [&::-webkit-slider-thumb]:rounded-full [&::-webkit-slider-thumb]:border-2 [&::-webkit-slider-thumb]:border-white [&::-webkit-slider-thumb]:bg-[#8a8a8a]"
        />
      </div>
    </footer>
  )
}

// ─── Dialog ───────────────────────────────────────────────────────────────────

function RuleDialog() {
  return (
    <div
      role="dialog"
      aria-label="新建格式规则"
      className="absolute top-[275px] left-[674px] z-20 w-[404px] border border-[#6b6b6b] bg-[#f0f0f0] text-xs leading-4 text-black shadow-[0_4px_18px_4px_rgba(0,0,0,0.35)]"
    >
      <div className="flex h-[25px] items-center gap-1 bg-white pr-[7px] pb-px pl-[3px]">
        <SheetLogo />
        新建格式规则
        <button type="button" aria-label="关闭" className="ml-auto">
          <Icon>
            <path d="m3 3 10 10M13 3 3 13" strokeWidth="1.200" />
          </Icon>
        </button>
      </div>

      <div className="px-[11px] py-3">
        <p>选择规则类型(S):</p>
        <ul className="mt-[5px] border border-[#828790] bg-white p-px">
          {RULES.map((rule, i) => (
            <li
              key={rule}
              className={`flex h-[21px] items-center gap-2 pl-2 ${
                i === RULES.length - 1 ? 'bg-[#f0f0f0] text-[#444]' : ''
              }`}
            >
              <svg className="h-2.5 w-[5px]" viewBox="0 0 5 10" aria-hidden="true">
                <path d="M0 0v10l5-5z" fill="#555" />
              </svg>
              {rule}
            </li>
          ))}
        </ul>

        <p className="mt-2">编辑规则说明(E):</p>
        <div className="mt-2 h-[124px] border border-[#828790] px-2.5 pt-2.5">
          <label htmlFor="formula" className="block font-bold">
            只为满足以下条件的单元格设置格式(O):
          </label>
          <div className="relative mt-2 flex h-[21px] items-center bg-white pr-[3px]">
            <input
              id="formula"
              defaultValue={'=COUNTIF(A:A,A1&"*")>1'}
              className="h-full flex-1 pl-1.5 text-[13px] outline-none"
            />
            <span className="absolute left-[109px] h-[17px] w-px bg-black" />
            <button
              type="button"
              aria-label="选取区域"
              className="flex h-[19px] w-[22px] items-center justify-center border border-[#adadad] bg-[#e1e1e1]"
            >
              <svg className="h-3.5 w-4" viewBox="0 0 16 14" aria-hidden="true">
                <path d="M0 0h16v14H0z" fill="#bcd4fb" />
                <path d="M1 4h8v9H1z" fill="#eef4ff" />
                <path d="M1 7h8v1H1z" fill="#a9bfe6" />
                <path d="M0 1h7v3H0z" fill="#25377c" />
                <path d="M8 5v7l2-1.500 2 3 1.500-1-1.800-3H14z" fill="#6b4a45" />
              </svg>
            </button>
          </div>
          <div className="mt-1.5 border-t border-[#a0a0a0]" />
          <div className="mt-2 flex items-center">
            <span className="w-[33px] shrink-0 font-bold whitespace-nowrap">预览:</span>
            <span className="flex h-10 w-[200px] items-center justify-center border border-black bg-white text-sm">
              未设定格式
            </span>
            <button type="button" className="ml-[7px] h-[30px] w-[77px] border border-[#adadad] bg-[#e1e1e1]">
              格式(F)...
            </button>
          </div>
        </div>

        <div className="mt-1.5 flex justify-end gap-2 pr-2">
          <button type="button" className="h-[30px] w-[77px] border-2 border-[#0078d7] bg-[#e1e1e1]">
            确定
          </button>
          <button type="button" className="h-[30px] w-[77px] border border-[#adadad] bg-[#e1e1e1]">
            取消
          </button>
        </div>
      </div>
    </div>
  )
}

// ─── Overlays ─────────────────────────────────────────────────────────────────

function Arrows() {
  return (
    <svg
      className="pointer-events-none absolute top-[530px] left-[640px] z-30 h-[100px] w-[480px] drop-shadow-[2px_3px_2px_rgba(0,0,0,0.5)]"
      viewBox="0 0 480 100"
      fill="#fe0000"
      stroke="#8c1010"
      strokeWidth=".6"
      aria-hidden="true"
    >
      <path d="M60 17 38 34l5 2L9.500 79l2.500 2L46.500 38.500l.5 4.500z" />
      <path d="M393 63.500l27 1.500-4-4.500 49-16-1-3-49 16 1-6z" transform="translate(0 -1)" />
    </svg>
  )
}

function Watermark() {
  return (
    <div className="pointer-events-none absolute right-[11px] bottom-2 z-30 flex items-center">
      <svg className="h-10 w-11" viewBox="0 0 44 40" aria-hidden="true">
        <defs>
          <linearGradient id="swirlTop" x1="0" y1="1" x2="1" y2="0">
            <stop offset="0" stopColor="#4f86cf" />
            <stop offset="1" stopColor="#5cb8ea" />
          </linearGradient>
          <linearGradient id="swirlEnd" x1="0" y1="1" x2="1" y2="0">
            <stop offset="0" stopColor="#e2e055" />
            <stop offset="1" stopColor="#55bb7c" />
          </linearGradient>
        </defs>
        <path d="M44 1C26-1 8 9 2 22c-4 9 0 13 7 15-4-6-1-13 6-19C22 11 32 4 44 1z" fill="url(#swirlTop)" />
        <path d="M17 22c6-9 25-11 25 2 0 10-16 15-32 14 12-1 23-7 24-13 1-5-9-6-17-3z" fill="url(#swirlEnd)" />
        <path d="M14 25c2-6 11-8 12-4 0 4-6 7-12 8 4-2 8-4 7-6s-5-1-7 2z" fill="#4f8fd6" />
      </svg>
      <div className="flex flex-col font-bold whitespace-nowrap">
        <span className="text-[21px] leading-6 text-[#5c9ad4]">极光下载站</span>
        <span className="font-['Liberation_Sans',sans-serif] text-base leading-5 text-[#63c487]">www.xz7.com</span>
      </div>
    </div>
  )
}

function InputMethod() {
  return (
    <div className="absolute right-[3px] bottom-1 z-20 flex h-[25px] w-[60px] items-center justify-center gap-1 rounded-md border border-[#555] bg-white text-[13px] text-[#222] shadow-[0_1px_3px_rgba(0,0,0,0.5)]">
      <span>AA</span>
      <Icon box={12} className="size-3">
        <path d="M5 1c5 0 6 6 2 9-2 1.500-5 1-6-1 4 1 6-4 4-8zM8 6v2" strokeWidth="1.200" />
      </Icon>
      <span>简</span>
    </div>
  )
}

// ─── App ──────────────────────────────────────────────────────────────────────

export default function App() {
  return (
    <div className="relative flex h-screen flex-col overflow-hidden bg-linear-to-r from-[#e7ebee] to-[#e4e5eb] to-60% font-['Noto_Sans','Noto_Sans_CJK_SC',sans-serif]">
      <TabBar />
      <MenuBar />
      <Ribbon />
      <div className="flex min-h-0 flex-1">
        <main className="flex min-w-0 flex-1 flex-col">
          <FormulaBar />
          <Grid />
          <SheetTabs />
        </main>
        <SelectionPane />
        <ToolRail />
      </div>
      <StatusBar />
      <RuleDialog />
      <Arrows />
      <InputMethod />
      <Watermark />
    </div>
  )
}
